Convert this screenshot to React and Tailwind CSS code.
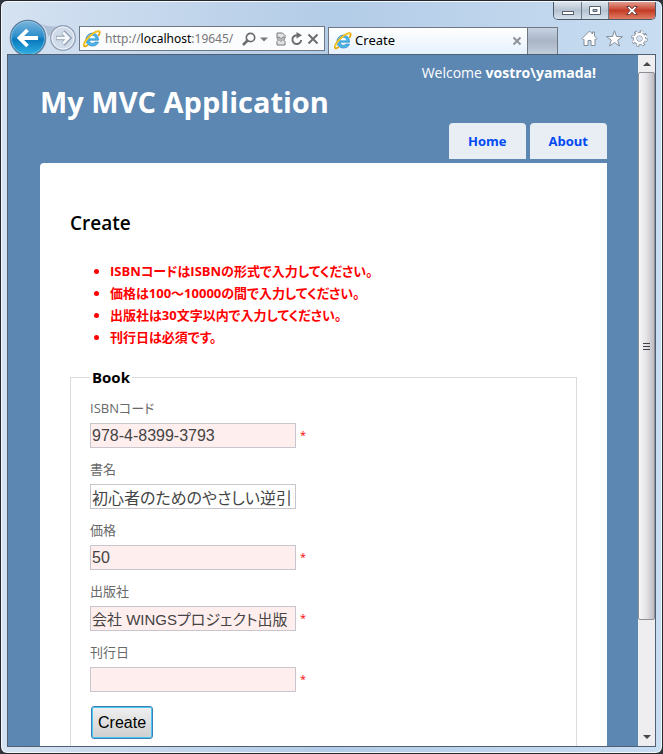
import { useState } from 'react';

const ERRORS = [
  'ISBNコードはISBNの形式で入力してください。',
  '価格は100～10000の間で入力してください。',
  '出版社は30文字以内で入力してください。',
  '刊行日は必須です。',
];

const FIELDS = [
  { name: 'isbn', label: 'ISBNコード', value: '978-4-8399-3793', invalid: true },
  { name: 'title', label: '書名', value: '初心者のためのやさしい逆引き', invalid: false },
  { name: 'price', label: '価格', value: '50', invalid: true },
  { name: 'publisher', label: '出版社', value: '会社 WINGSプロジェクト出版', invalid: true, compact: true },
  { name: 'published', label: '刊行日', value: '', invalid: true },
];

function ExplorerLogo() {
  return (
    <svg className="h-[18px] w-[18px] shrink-0" viewBox="0 0 18 18" fill="none" aria-hidden="true">
      <path d="M15.6 12.2C14.6 14.6 12.3 16 9.5 16 5.6 16 3 13.4 3 9.6 3 5.9 5.7 3.2 9.4 3.2c3.9 0 6.2 2.7 6.1 7H6.3c.2 2 1.5 3.1 3.3 3.1 1.2 0 2-.4 2.5-1.3z" fill="#4bb3e6" stroke="#2a86c4" strokeWidth=".7" />
      <path d="M6.4 8.2h5.8c-.2-1.6-1.2-2.5-2.8-2.5S6.7 6.6 6.4 8.2z" fill="#fff" />
      <path d="M4.3 8.3C4.9 5.8 6.8 4.4 9.3 4.3" stroke="#a8def7" strokeWidth="1" />
      <path d="M4.3 15.3C2.6 16.6 1.3 16.7 1 15.7.5 13.4 3.6 8.6 8 5 11.9 1.7 15.7.3 16.5 1.7c.4.8.1 2-.7 3.4" stroke="#e9a800" strokeWidth="1.800" strokeLinecap="round" />
      <path d="M1.2 15C1.5 12.5 4.5 8.2 8 5.3c3.4-2.9 6.7-4.2 7.9-3.7" stroke="#ffe04a" strokeWidth=".9" strokeLinecap="round" />
    </svg>
  );
}

function NavButtons() {
  return (
    <div className="ml-0.5 flex shrink-0 items-end">
      <button type="button" aria-label="Back" className="block">
        <svg className="block h-[35px] w-[38px]" viewBox="0 0 38 35">
          <defs>
            <linearGradient id="back" x1="0" y1="0" x2="0" y2="1">
              <stop offset="0" stopColor="#7fb6dc" />
              <stop offset=".45" stopColor="#2c8fcb" />
              <stop offset=".55" stopColor="#0879bd" />
              <stop offset="1" stopColor="#35b4e6" />
            </linearGradient>
          </defs>
          <circle cx="19" cy="19" r="17.7" fill="url(#back)" stroke="#5f7f9c" strokeWidth="1.2" />
          <circle cx="19" cy="19" r="16.5" fill="none" stroke="#8fd0ef" strokeOpacity=".6" />
          <path d="M29 19H11M18.5 11 10.5 19l8 8" fill="none" stroke="#fff" strokeWidth="3.8" />
        </svg>
      </button>
      <button type="button" aria-label="Forward" className="block">
        <svg className="block h-[35px] w-8 overflow-visible" viewBox="0 0 32 35">
          <path d="M-7 4C-1 8 6 8 14 7L6 13 1 18C0 11-2 8-7 4z" fill="#a3b4ca" fillOpacity=".7" />
          <circle cx="16" cy="19" r="12.3" fill="#d0dbe9" stroke="#95a3b8" strokeWidth="1.4" />
          <circle cx="16" cy="19" r="11" fill="none" stroke="#f0f5fb" />
          <path d="M9 19h12.500M16 13l6 6-6 6" fill="none" stroke="#929fb3" strokeWidth="4.6" />
          <path d="M9.5 19H21M16 13.5l5.5 5.5-5.5 5.5" fill="none" stroke="#f7fafd" strokeWidth="2.6" />
        </svg>
      </button>
    </div>
  );
}

function AddressBar() {
  return (
    <div className="mb-[3px] flex h-[25px] min-w-0 flex-[5] items-center border border-[#6f7782] bg-[#fafcfe] pl-[3px] pr-[5px]">
      <ExplorerLogo />
      <p className="ml-1 min-w-0 flex-1 whitespace-nowrap font-['Noto_Sans',sans-serif] text-[12px] text-[#777]">
        http://<span className="text-black">localhost</span>:19645/
      </p>
      <button type="button" aria-label="Search">
        <svg className="block h-4 w-[14px]" viewBox="0 0 14 16" fill="none" stroke="#6d6d6d">
          <circle cx="8.5" cy="6.5" r="4.2" strokeWidth="1.7" />
          <path d="M5.5 9.5 1 14" strokeWidth="2.6" />
        </svg>
      </button>
      <button type="button" aria-label="Show address history" className="ml-1">
        <svg className="block h-4 w-2" viewBox="0 0 8 16">
          <path d="M0 6.5h8L4 10.5z" fill="#777" />
        </svg>
      </button>
      <button type="button" aria-label="Compatibility view" className="ml-2">
        <svg className="block h-4 w-[10px]" viewBox="0 0 10 16" fill="#e4e4e4" stroke="#777">
          <path d="M1 7.5V2h5.5L9 4.5v3L7 5.8 5 7.8 3 5.8z" />
          <path d="M1 14h8v-3.5l-2-2-2 2-2-2-2 2z" />
          <path d="M1 9l2-1.6L5 9.3 7 7.4 9 9" fill="none" stroke="#999" />
        </svg>
      </button>
      <button type="button" aria-label="Refresh" className="ml-[5px]">
        <svg className="block h-4 w-3" viewBox="0 0 12 16" fill="none" stroke="#6d6d6d" strokeWidth="1.9">
          <path d="M6.5 4.3A4.4 4.4 0 1 0 10.2 9" />
          <path d="M5.5 1 11 4.3 5.5 7.6z" fill="#6d6d6d" stroke="none" />
        </svg>
      </button>
      <button type="button" aria-label="Stop" className="ml-1">
        <svg className="block h-4 w-3" viewBox="0 0 12 16" stroke="#6d6d6d" strokeWidth="2">
          <path d="m1.5 3.5 9 9m0-9-9 9" />
        </svg>
      </button>
    </div>
  );
}

function ToolIcons() {
  return (
    <div className="mb-[7px] ml-[23px] mr-2 flex shrink-0 gap-2">
      <button type="button" aria-label="Home">
        <svg className="block h-[17px] w-[17px]" viewBox="0 0 17 17" fill="#fff" stroke="#848c98">
          <path d="M8.5 1 1 8.5l1.3 1.3.7-.5V15.5h4v-5h3v5h4V9.3l.7.5L16 8.5l-2.5-2.5V2h-2v2z" />
        </svg>
      </button>
      <button type="button" aria-label="Favorites">
        <svg className="block h-[17px] w-[17px]" viewBox="0 0 17 17" fill="#fff" stroke="#848c98">
          <path d="m8.5.8 2 5.7 6 .1-4.8 3.6 1.8 5.8-5-3.5L3.5 16l1.8-5.8L.5 6.6l6-.1z" />
        </svg>
      </button>
      <button type="button" aria-label="Tools">
        <svg className="block h-[17px] w-[17px]" viewBox="0 0 17 17" fill="none">
          <circle cx="8.5" cy="8.5" r="6.7" stroke="#848c98" strokeWidth="3.2" strokeDasharray="3 2.262" />
          <circle cx="8.5" cy="8.5" r="4.5" stroke="#848c98" strokeWidth="4" />
          <circle cx="8.5" cy="8.5" r="6.5" stroke="#fff" strokeWidth="2.2" strokeDasharray="1.8 3.305" strokeDashoffset="-.6" />
          <circle cx="8.5" cy="8.5" r="4.4" stroke="#fff" strokeWidth="2.6" />
          <circle cx="8.5" cy="8.5" r="2.3" fill="#d9e5f3" />
        </svg>
      </button>
    </div>
  );
}

function CaptionButtons() {
  return (
    <div className="flex h-[18px] overflow-hidden rounded-b-[5px] border border-t-0 border-[#4d5867]">
      <button type="button" aria-label="Minimize" className="w-7 border-r border-[#6b7889] bg-linear-to-b from-[#dce5ee] via-[#b5c2d0] to-[#d5e1ec]">
        <svg className="mx-auto block h-[17px] w-3" viewBox="0 0 12 17">
          <rect x=".5" y="9.5" width="11" height="3" fill="#fff" stroke="#59616c" />
        </svg>
      </button>
      <button type="button" aria-label="Maximize" className="w-[27px] border-r border-[#6b7889] bg-linear-to-b from-[#dce5ee] via-[#b5c2d0] to-[#d5e1ec]">
        <svg className="mx-auto block h-[17px] w-3" viewBox="0 0 12 17">
          <path d="M.5 4.5h11v8H.5zM4 7.5v2h4v-2z" fill="#fff" fillRule="evenodd" stroke="#59616c" />
        </svg>
      </button>
      <button type="button" aria-label="Close" className="w-[46px] bg-linear-to-b from-[#e29c90] via-[#c43a24] to-[#e07c62]">
        <svg className="mx-auto block h-[17px] w-3" viewBox="0 0 12 17">
          <path d="M.5 4.5h3.2L6 6.7l2.3-2.2h3.2L8 8.5l3.5 4H8.3L6 10.2l-2.3 2.3H.5L4 8.5z" fill="#fff" stroke="#6a3a38" />
        </svg>
      </button>
    </div>
  );
}

function BrowserChrome() {
  return (
    <header className="shrink-0">
      <div className="flex h-[18px] justify-end">
        <CaptionButtons />
      </div>
      <div className="flex h-[34px] items-end">
        <NavButtons />
        <AddressBar />
        <div className="ml-[3px] flex h-[27px] min-w-0 flex-[4] items-center border border-b-0 border-[#6f7782] bg-linear-to-b from-white to-[#e6f1fc] pl-[5px] pr-1">
          <ExplorerLogo />
          <span className="ml-[3px] flex-1 font-['Noto_Sans',sans-serif] text-[13px] text-black">Create</span>
          <button type="button" aria-label="Close tab">
            <svg className="block h-3 w-3" viewBox="0 0 12 12" stroke="#8e9299" strokeWidth="2">
              <path d="m2.5 2.5 7 7m0-7-7 7" />
            </svg>
          </button>
        </div>
        <button type="button" aria-label="New tab" className="h-[27px] w-[30px] shrink-0 border border-b-0 border-l-0 border-[#6f7782] bg-linear-to-b from-[#c6d3e3] via-[#a9b5c6] to-[#c3cedb]" />
        <ToolIcons />
      </div>
    </header>
  );
}

function Scrollbar() {
  return (
    <div className="flex w-[17px] shrink-0 flex-col bg-[#eeeef0]">
      <svg className="h-[17px] w-[17px] shrink-0" viewBox="0 0 17 17" aria-hidden="true">
        <path d="M5 11h8L9 7z" fill="#44484d" />
      </svg>
      <div className="flex flex-[548] items-center justify-center rounded-[2px] border border-[#8e8e94] bg-linear-to-r from-[#f7f7f8] via-[#e3e2e6] to-[#bdbcc3]">
        <svg className="h-2 w-[7px]" viewBox="0 0 7 8" aria-hidden="true">
          <path d="M0 1.5h7M0 4.5h7M0 7.5h7" stroke="#3f4045" />
        </svg>
      </div>
      <div className="flex-[109]" />
      <svg className="h-[17px] w-[17px] shrink-0" viewBox="0 0 17 17" aria-hidden="true">
        <path d="M5 6h8l-4 4z" fill="#44484d" />
      </svg>
    </div>
  );
}

function Field({ field }) {
  const [value, setValue] = useState(field.value);

  return (
    <div>
      <label htmlFor={field.name} className="block h-5 text-[13px] leading-5">
        {field.label}
      </label>
      <div className="mb-[11px] mt-[5px] flex h-[25px] items-center">
        <input
          id={field.name}
          type="text"
          value={value}
          onChange={(e) => setValue(e.target.value)}
          aria-invalid={field.invalid}
          className={`h-[25px] w-[206px] border border-[#c8c5cc] px-px font-['Liberation_Sans','Noto_Sans_CJK_JP',sans-serif] text-[#444] outline-none [font-feature-settings:'palt'] ${
            field.invalid ? 'bg-[#ffeeee]' : 'bg-white'
          } ${field.compact ? 'text-[15px]' : 'text-base'}`}
        />
        {field.invalid && <span className="ml-1 text-[11px] text-[#ff0000]">*</span>}
      </div>
    </div>
  );
}

function CreatePage() {
  return (
    <div className="min-w-0 flex-1 overflow-hidden bg-[#5c87b2] pl-8 pr-[31px] font-['Open_Sans','Noto_Sans_CJK_JP',sans-serif] text-[#696969]">
      <header className="text-white">
        <p className="pr-[11px] pt-2 text-right text-[14px] leading-5">
          Welcome <strong className="font-bold">vostro\yamada!</strong>
        </p>
        <h1 className="pb-0.5 text-[29px] font-bold leading-[38px]">My MVC Application</h1>
      </header>
      <nav className="mb-1 flex justify-end gap-1 text-[13px] font-bold leading-5 text-[#034af3]">
        <a href="#home" className="rounded-t-[4px] bg-[#e8eef4] px-[19px] py-2">
          Home
        </a>
        <a href="#about" className="rounded-t-[4px] bg-[#e8eef4] px-[19px] py-2">
          About
        </a>
      </nav>
      <main className="rounded-tl-[4px] bg-white px-[30px] pt-12">
        <h2 className="text-[19px] font-semibold leading-6 text-black">Create</h2>
        <ul className="mt-[25px] list-disc pl-10 text-[13px] font-bold leading-[22px] text-[#ff0000] [font-feature-settings:'palt']">
          {ERRORS.map((message) => (
            <li key={message}>{message}</li>
          ))}
        </ul>
        <form onSubmit={(e) => e.preventDefault()} className="mt-[19px]">
          <fieldset className="border border-[#dbdbdb] px-[19px] pb-5">
            <legend className="px-0.5 text-[15px] font-bold leading-5 text-black">Book</legend>
            <div className="mt-[11px] [font-feature-settings:'palt']">
              {FIELDS.map((field) => (
                <Field key={field.name} field={field} />
              ))}
            </div>
            <button
              type="submit"
              className="ml-px mt-[3px] h-[33px] rounded-[3px] border border-[#3c7fb1] bg-linear-to-b from-[#f0f0f0] to-[#cfcfcf] px-1.5 font-['Liberation_Sans',sans-serif] text-base text-black shadow-[inset_0_0_0_1px_#48c8f4]"
            >
              Create
            </button>
          </fieldset>
        </form>
      </main>
    </div>
  );
}

export default function App() {
  return (
    <div className="h-screen bg-[#30343c]">
      <div className="flex h-full flex-col overflow-hidden rounded-[7px] border border-[#23262c] bg-linear-to-r from-[#d5e2f1] via-[#b3cce7] to-[#c8ddf1] px-1.5 pb-1.5 pt-px shadow-[inset_0_0_0_1px_#f4f9fd]">
        <BrowserChrome />
        <div className="flex min-h-0 flex-1 border border-[#4f5f74]">
          <CreatePage />
          <Scrollbar />
        </div>
      </div>
    </div>
  );
}
